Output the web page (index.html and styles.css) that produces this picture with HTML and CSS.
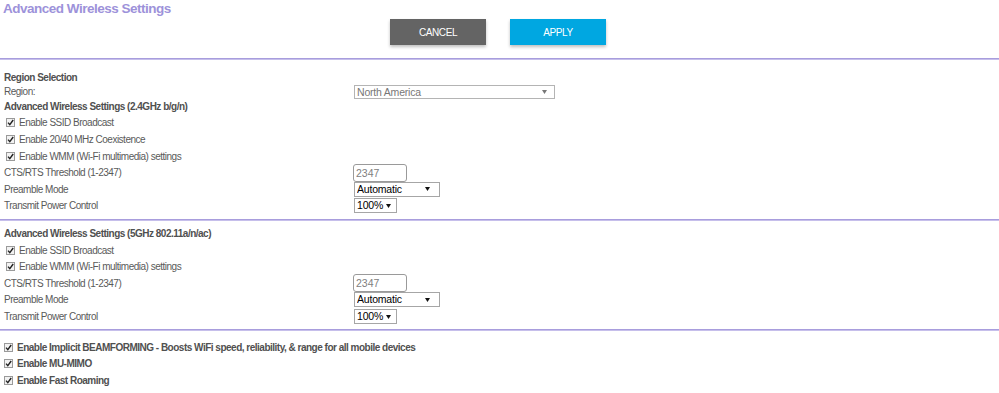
FILE: index.html
```html
<!DOCTYPE html>
<html lang="en">
<head>
    <meta charset="UTF-8">
    <meta name="viewport" content="width=device-width, initial-scale=1.0">
    <title>Advanced Wireless Settings</title>
    <link rel="stylesheet" href="styles.css">
</head>
<body>
    <h1 class="page-title">Advanced Wireless Settings</h1>
    <div class="actions">
        <button class="btn btn-cancel">CANCEL</button>
        <button class="btn btn-apply">APPLY</button>
    </div>
    <div class="divider"></div>

    <div class="section section-first">
        <div class="row head first">Region Selection</div>
        <div class="row short">
            <span class="label">Region:</span>
            <select class="select select-region"><option>North America</option></select>
        </div>
        <div class="row head tall">Advanced Wireless Settings (2.4GHz b/g/n)</div>
        <label class="row check"><input type="checkbox" checked> Enable SSID Broadcast</label>
        <label class="row check"><input type="checkbox" checked> Enable 20/40 MHz Coexistence</label>
        <label class="row check"><input type="checkbox" checked> Enable WMM (Wi-Fi multimedia) settings</label>
        <div class="row">
            <span class="label">CTS/RTS Threshold (1-2347)</span>
            <input class="text-input" type="text" value="2347">
        </div>
        <div class="row">
            <span class="label">Preamble Mode</span>
            <select class="select select-mode"><option>Automatic</option></select>
        </div>
        <div class="row">
            <span class="label">Transmit Power Control</span>
            <select class="select select-power"><option>100%</option></select>
        </div>
    </div>
    <div class="divider"></div>

    <div class="section section-second">
        <div class="row head">Advanced Wireless Settings (5GHz 802.11a/n/ac)</div>
        <label class="row check"><input type="checkbox" checked> Enable SSID Broadcast</label>
        <label class="row check"><input type="checkbox" checked> Enable WMM (Wi-Fi multimedia) settings</label>
        <div class="row">
            <span class="label">CTS/RTS Threshold (1-2347)</span>
            <input class="text-input" type="text" value="2347">
        </div>
        <div class="row">
            <span class="label">Preamble Mode</span>
            <select class="select select-mode"><option>Automatic</option></select>
        </div>
        <div class="row">
            <span class="label">Transmit Power Control</span>
            <select class="select select-power"><option>100%</option></select>
        </div>
    </div>
    <div class="divider"></div>

    <div class="section section-last">
        <label class="row check bold"><input type="checkbox" checked> Enable Implicit BEAMFORMING - Boosts WiFi speed, reliability, &amp; range for all mobile devices</label>
        <label class="row check bold"><input type="checkbox" checked> Enable MU-MIMO</label>
        <label class="row check bold"><input type="checkbox" checked> Enable Fast Roaming</label>
    </div>
</body>
</html>
```

FILE: styles.css
```css
body {
    font-family: "Liberation Sans", Arial, sans-serif;
    font-size: 10px;
    letter-spacing: -0.5px;
    color: #5a5a5a;
    margin: 0;
    padding: 0;
    background-color: #fff;
}
.page-title {
    margin: 0;
    padding: 1px 0 0 3px;
    font-size: 13.5px;
    line-height: 16px;
    font-weight: bold;
    letter-spacing: -0.5px;
    color: #9d92da;
}
.actions {
    display: flex;
    justify-content: center;
    gap: 24px;
    margin-top: 2px;
    padding-right: 3px;
}
.btn {
    width: 96px;
    height: 26px;
    border: none;
    color: #fff;
    font-family: "Liberation Sans", Arial, sans-serif;
    font-size: 10px;
    letter-spacing: -0.4px;
    box-shadow: 0 2px 3px rgba(0, 0, 0, 0.25);
    cursor: pointer;
}
.btn-cancel {
    background-color: #646464;
}
.btn-apply {
    background-color: #00a7e1;
}
.divider {
    height: 1px;
    background-color: #a89ddd;
    border-bottom: 1px solid #c6bfeb;
}
.actions + .divider {
    margin-top: 13px;
}
.section {
    padding-left: 4px;
}
.section-first {
    padding-top: 9.5px;
    padding-bottom: 4.5px;
}
.section-second {
    padding-top: 4.5px;
    padding-bottom: 4.5px;
}
.section-last {
    padding-top: 7.5px;
}
.row {
    display: flex;
    align-items: center;
    height: 16.6px;
}
.row.first {
    height: 15px;
}
.row.short {
    height: 14.5px;
}
.row.tall {
    height: 15.7px;
}
.head {
    font-weight: bold;
    color: #505050;
}
.label {
    width: 350px;
    flex: none;
}
.check {
    padding-left: 2px;
}
.check.bold {
    padding-left: 0;
    font-weight: bold;
    color: #505050;
}
.check input {
    appearance: none;
    -webkit-appearance: none;
    width: 9px;
    height: 9px;
    margin: 0 4px 0 0;
    border: 1px solid #9a9a9a;
    background: #f2f2f2 url("data:image/svg+xml,%3Csvg xmlns='http://www.w3.org/2000/svg' viewBox='0 0 7 7'%3E%3Cpath d='M1 3.6 L2.8 5.6 L6.2 1' fill='none' stroke='%23222' stroke-width='1.4'/%3E%3C/svg%3E") center / 7px 7px no-repeat;
    flex: none;
}
.text-input {
    box-sizing: border-box;
    width: 54px;
    height: 18px;
    margin-left: -1px;
    padding: 0 2px;
    border: 1px solid #9a9a9a;
    border-radius: 3px;
    font-family: "Liberation Sans", Arial, sans-serif;
    font-size: 10.5px;
    color: #808080;
}
.select {
    appearance: none;
    -webkit-appearance: none;
    box-sizing: border-box;
    height: 15px;
    margin: 0;
    padding: 0 0 0 2px;
    border: 1px solid #a6a6a6;
    border-radius: 0;
    font-family: "Liberation Sans", Arial, sans-serif;
    font-size: 10.5px;
    letter-spacing: -0.2px;
    line-height: 13px;
    color: #000;
    background: #fff url("data:image/svg+xml,%3Csvg xmlns='http://www.w3.org/2000/svg' viewBox='0 0 5 4'%3E%3Cpath d='M0 0 H5 L2.5 4 Z' fill='%23111'/%3E%3C/svg%3E") right 7px center / 5px 4px no-repeat;
}
.select-region {
    width: 201px;
    height: 14px;
    color: #777;
    border-color: #b4b4b4;
    background-image: url("data:image/svg+xml,%3Csvg xmlns='http://www.w3.org/2000/svg' viewBox='0 0 5 4'%3E%3Cpath d='M0 0 H5 L2.5 4 Z' fill='%23777'/%3E%3C/svg%3E");
}
.select-mode {
    width: 86px;
    background-position: right 9px center;
}
.select-power {
    width: 43px;
    background-position: right 5px center;
}
```
